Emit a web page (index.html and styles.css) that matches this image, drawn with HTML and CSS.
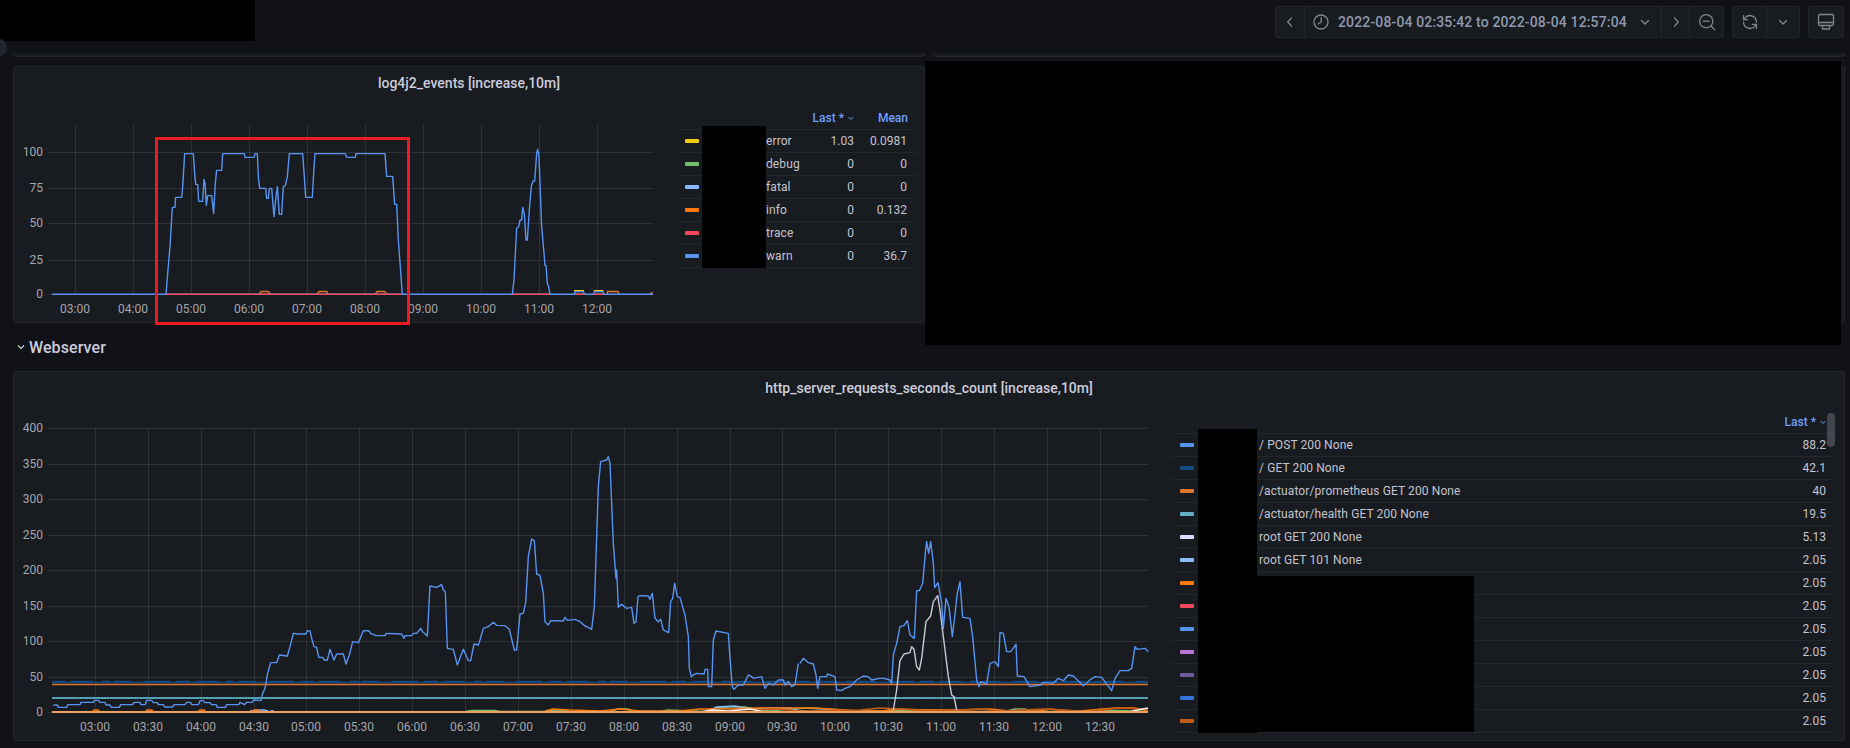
FILE: index.html
```html
<!DOCTYPE html>
<html lang="en">
<head>
<meta charset="utf-8">
<title>Dashboard</title>
<link rel="stylesheet" href="styles.css">
</head>
<body>
<div class="dash">
  <header class="topbar">
    <div class="group">
      <button class="tb tb-narrow"><svg class="ico" viewBox="0 0 16 16"><path d="M9.500 4 5.700 8l3.800 4"/></svg></button>
      <button class="tb tb-time">
        <svg class="ico ico-clock" viewBox="0 0 16 16"><circle cx="8" cy="8" r="7"/><path d="M8.200 3.600V8L5.200 10"/></svg>
        <span class="range">2022-08-04 02:35:42 to 2022-08-04 12:57:04</span>
        <svg class="ico ico-down" viewBox="0 0 16 16"><path d="M4.500 6.500 8 10l3.500-3.500"/></svg>
      </button>
      <button class="tb tb-narrow"><svg class="ico" viewBox="0 0 16 16"><path d="M6.500 4l3.800 4-3.800 4"/></svg></button>
      <button class="tb tb-zoom"><svg class="ico ico-lg" viewBox="0 0 18 18"><circle cx="8.200" cy="8.200" r="6.600"/><path d="M5.200 8.200h6M13 13l3.500 3.500"/></svg></button>
    </div>
    <div class="group">
      <button class="tb tb-half"><svg class="ico ico-lg" viewBox="0 0 18 18"><path d="M15.500 9A6.500 6.500 0 0 0 4.300 4.600L2.600 6.600"/><path d="M2.600 2.600v4h4"/><path d="M2.500 9a6.500 6.500 0 0 0 11.200 4.400l1.700-2"/><path d="M15.400 15.400v-4h-4"/></svg></button>
      <button class="tb tb-half"><svg class="ico" viewBox="0 0 16 16"><path d="M4.500 6.500 8 10l3.500-3.500"/></svg></button>
    </div>
    <div class="group">
      <button class="tb tb-monitor"><svg class="ico ico-lg" viewBox="0 0 18 18"><rect x="1.500" y="1.500" width="15" height="11" rx="1.500"/><path d="M1.500 9.500h15M5.500 12.500v3.500h7v-3.500"/></svg></button>
    </div>
  </header>

  <div class="cols stubs">
    <div class="stub"></div>
    <div class="stub"></div>
  </div>

  <div class="cols upper">
    <section class="panel">
      <h2 class="panel-title">log4j2_events [increase,10m]</h2>
      <div class="panel-body">
        <svg class="chart chart-a" viewBox="14 99 650 223">
          <g class="grid">
            <path d="M48 152.500H653M48 188.500H653M48 223.500H653M48 260.500H653M48 294.500H653"/>
            <path d="M75.500 125V294M133.500 125V294M191.500 125V294M249.500 125V294M307.500 125V294M365.500 125V294M423.500 125V294M481.500 125V294M539.500 125V294M597.500 125V294"/>
          </g>
          <g class="axis">
            <text class="yl" x="43" y="156">100</text>
            <text class="yl" x="43" y="192">75</text>
            <text class="yl" x="43" y="227">50</text>
            <text class="yl" x="43" y="264">25</text>
            <text class="yl" x="43" y="298">0</text>
            <text class="xl" x="75" y="313">03:00</text>
            <text class="xl" x="133" y="313">04:00</text>
            <text class="xl" x="191" y="313">05:00</text>
            <text class="xl" x="249" y="313">06:00</text>
            <text class="xl" x="307" y="313">07:00</text>
            <text class="xl" x="365" y="313">08:00</text>
            <text class="xl" x="423" y="313">09:00</text>
            <text class="xl" x="481" y="313">10:00</text>
            <text class="xl" x="539" y="313">11:00</text>
            <text class="xl" x="597" y="313">12:00</text>
          </g>
          <path class="ln s-orange" d="M259 294.300L261 291.500H268.500L270.500 294.300M317 294.300L319 291.500H327L328 294.300M375 294.300L377 291.500H385L386.500 294.300M607.500 294.300V291.500H618L619 294.300M651 294V293H653"/>
          <path class="ln s-yellow" d="M574 290.700H584M594 290.700H603.500"/>
          <path class="ln s-blue" d="M52 294.300H653"/>
          <path class="ln s-red" d="M166 294.300H402M512 294.300H550M575 294.300H585M594 294.300H603"/>
          <g transform="translate(0 40) scale(.33333)">
            <polyline class="ln s-blue" points="498,763 503,700 510,620 517,502 525,502 527,472 545,472 548,440 554,341 580,341 584,400 587,433 593,433 596,484 608,484 612,418 615,430 619,497 623,467 635,467 641,520 646,430 650,391 665,391 668,341 733,341 735,352 762,352 765,341 772,341 775,410 779,445 797,445 800,475 805,475 808,445 815,445 822,530 827,480 832,440 838,523 845,523 850,440 856,437 862,410 868,341 908,341 913,410 917,472 937,472 941,400 945,341 1036,341 1040,352 1066,352 1068,341 1155,341 1160,409 1178,409 1184,493 1190,493 1195,600 1207,763"/>
          </g>
          <g transform="translate(440 100) scale(.33333)">
            <polyline class="ln s-blue" points="217,583 222,540 230,385 236,380 240,360 245,360 248,322 253,342 258,420 262,420 268,330 274,258 279,243 284,243 290,160 293,148 297,170 305,380 312,460 315,496 318,496 322,550 326,560 330,583"/>
            <polyline class="ln s-blue" points="403,583 405,575 430,575 434,583"/>
            <polyline class="ln s-blue" points="460,583 463,575 488,575 492,583"/>
          </g>
        </svg>
        <div class="legend legend-a">
          <div class="lg-head"><span class="lg-h lg-last">Last * <svg class="sort" viewBox="0 0 8 8"><path d="M1.500 3 4 5.500 6.500 3"/></svg></span><span class="lg-h lg-mean">Mean</span></div>
          <div class="lg-row"><i class="sw c-yellow"></i><span class="nm">error</span><span class="v">1.03</span><span class="v v2">0.0981</span></div>
          <div class="lg-row"><i class="sw c-green"></i><span class="nm">debug</span><span class="v">0</span><span class="v v2">0</span></div>
          <div class="lg-row"><i class="sw c-lblue"></i><span class="nm">fatal</span><span class="v">0</span><span class="v v2">0</span></div>
          <div class="lg-row"><i class="sw c-orange"></i><span class="nm">info</span><span class="v">0</span><span class="v v2">0.132</span></div>
          <div class="lg-row"><i class="sw c-red"></i><span class="nm">trace</span><span class="v">0</span><span class="v v2">0</span></div>
          <div class="lg-row"><i class="sw c-blue"></i><span class="nm">warn</span><span class="v">0</span><span class="v v2">36.7</span></div>
        </div>
      </div>
    </section>
    <section class="panel"></section>
  </div>

  <h3 class="row-title"><svg class="row-chev" viewBox="0 0 8 8"><path d="M1 2.500 4 5.500 7 2.500"/></svg>Webserver</h3>

  <section class="panel panel-wide">
    <h2 class="panel-title">http_server_requests_seconds_count [increase,10m]</h2>
    <div class="panel-body">
      <svg class="chart chart-b" viewBox="14 404 1158 336">
        <g class="grid">
          <path d="M48 428.500H1148M48 464.500H1148M48 499.500H1148M48 535.500H1148M48 570.500H1148M48 606.500H1148M48 641.500H1148M48 677.500H1148M48 712.500H1148"/>
          <path d="M95.500 428V712M148.500 428V712M201.500 428V712M254.500 428V712M306.500 428V712M359.500 428V712M412.500 428V712M465.500 428V712M518.500 428V712M571.500 428V712M624.500 428V712M677.500 428V712M730.500 428V712M782.500 428V712M835.500 428V712M888.500 428V712M941.500 428V712M994.500 428V712M1047.500 428V712M1100.500 428V712"/>
        </g>
        <g class="axis">
          <text class="yl" x="43" y="432">400</text>
          <text class="yl" x="43" y="468">350</text>
          <text class="yl" x="43" y="503">300</text>
          <text class="yl" x="43" y="539">250</text>
          <text class="yl" x="43" y="574">200</text>
          <text class="yl" x="43" y="610">150</text>
          <text class="yl" x="43" y="645">100</text>
          <text class="yl" x="43" y="681">50</text>
          <text class="yl" x="43" y="716">0</text>
          <text class="xl" x="95" y="731">03:00</text>
          <text class="xl" x="148" y="731">03:30</text>
          <text class="xl" x="201" y="731">04:00</text>
          <text class="xl" x="254" y="731">04:30</text>
          <text class="xl" x="306" y="731">05:00</text>
          <text class="xl" x="359" y="731">05:30</text>
          <text class="xl" x="412" y="731">06:00</text>
          <text class="xl" x="465" y="731">06:30</text>
          <text class="xl" x="518" y="731">07:00</text>
          <text class="xl" x="571" y="731">07:30</text>
          <text class="xl" x="624" y="731">08:00</text>
          <text class="xl" x="677" y="731">08:30</text>
          <text class="xl" x="730" y="731">09:00</text>
          <text class="xl" x="782" y="731">09:30</text>
          <text class="xl" x="835" y="731">10:00</text>
          <text class="xl" x="888" y="731">10:30</text>
          <text class="xl" x="941" y="731">11:00</text>
          <text class="xl" x="994" y="731">11:30</text>
          <text class="xl" x="1047" y="731">12:00</text>
          <text class="xl" x="1100" y="731">12:30</text>
        </g>
        <path class="ln s-navy" d="M52 682.500H1148"/>
        <path class="ln s-navy dash-a" d="M52 681.500H1148"/>
        <path class="ln s-orange" d="M52 684.500H1148"/>
        <path class="ln2 s-cyan" d="M52 698H1148"/>
        <path class="ln s-cyandot" d="M52 698H1148"/>
        <path class="ln s-green" d="M465 711.500L472 710.500H495L500 711.500H545L550 710.500H565L570 711.500H610L618 709H628L634 711.500H660L668 710L680 710.500L705 711.500L715 708L728 707H745L755 709L770 711L790 709L810 708L825 709L850 711H885L889 710L950 710.500L960 711.500H1005L1015 709H1025L1030 711.500H1100L1104 710.500H1120L1148 711.500"/>
        <path class="ln s-lblue" d="M250 711L258 710H264L268 711M270 711H274M710 711L716 707L735 706L750 709L770 708L790 708L800 711L830 710L846 711M1000 712L1015 710L1022 711"/>
        <path class="ln s-orange2" d="M545 711L553 709L570 710L600 711L620 709L640 711H680L700 709H720L760 708H815L830 709L860 711H880L900 709L925 710H960L990 709L1010 711H1040L1050 709L1060 710L1080 711L1115 708H1135L1148 711"/>
        <path class="ln s-darkorange" d="M720 712L730 709L745 710L775 709L800 711L860 710L880 708L900 709L930 711L980 709L1000 711L1045 709L1060 710L1090 712L1118 708L1140 709L1148 710"/>
        <path class="ln s-white" d="M700 712L712 710L728 711L750 709L765 712M1132 711L1148 708"/>
        <path class="ln2 s-bright" d="M52 712H1148"/>
        <path class="ln s-orange2" d="M92 711.500L94 710H98L100 711.500M145 711.500L147 710H152L153 711.500M198 711.500L200 710H204L206 711.500M252 711.500L254 710H258L260 711.500"/>
        <g transform="translate(0 330) scale(.33333)">
          <polyline class="ln s-blue" points="160,1125 172,1125 175,1132 200,1132 203,1124 240,1124 243,1117 280,1117 283,1111 295,1111 300,1117 315,1117 318,1125 330,1125 333,1132 358,1132 362,1124 398,1124 402,1117 420,1117 423,1124 436,1124 440,1111 455,1111 460,1118 472,1118 475,1124 490,1124 494,1131 518,1131 522,1124 555,1124 560,1117 572,1117 575,1124 595,1124 600,1112 610,1112 615,1118 630,1118 634,1124 648,1124 652,1132 676,1132 680,1124 716,1124 720,1117 734,1124 740,1117 757,1117 760,1110 783,1112 788,1090 795,1075 803,1030 812,998 830,998 838,975 862,978 870,950 880,910 895,912 918,912 922,902 930,903 935,925 942,950 950,952 956,982 968,982 972,990 982,990 990,958 1002,990 1010,972 1030,972 1038,1002 1048,975 1058,935 1075,938 1090,902 1108,903 1112,910 1128,917 1155,917 1158,910 1205,912 1212,925 1215,917 1235,917 1240,910 1250,910 1262,895 1268,905 1282,918 1290,768 1310,772 1325,764 1330,780 1336,785 1342,955 1360,958 1372,1005 1390,958 1405,992 1412,992 1422,942 1435,945 1440,930"/>
        </g>
        <g transform="translate(480 420) scale(.33333)">
          <polyline class="ln s-blue" points="0,660 10,625 25,620 40,607 50,616 75,617 88,628 103,690 110,690 120,582 130,580 137,548 145,410 155,357 163,362 170,462 180,466 190,520 195,605 205,615 212,602 250,603 255,592 262,601 285,598 300,605 315,618 325,622 335,628 343,560 355,200 362,125 380,120 385,110 390,130 400,370 408,475 410,450 415,562 425,553 440,565 455,562 462,610 468,605 474,530 480,527 505,528 510,538 517,520 525,595 535,605 542,598 550,630 566,638 572,545 578,535 584,490 592,530 600,533 615,585 625,650 628,745 634,770 640,765 650,760 672,762 675,748 683,748 685,800 695,800 700,660 708,633 745,640 750,715 757,800 762,808 775,795 790,795 805,765 815,770 820,775 845,770 855,805 865,790 880,795 895,780 910,780 915,795 925,785 935,800 945,795 955,730"/>
        </g>
        <g transform="translate(800 420) scale(.33333)">
          <polyline class="ln s-silver" points="280,870 290,810 300,722 312,702 330,698 335,680 342,688 350,740 358,750 365,715 378,605 392,588 400,545 413,527 420,570 430,650 445,770 455,825 462,830 470,870"/>
          <polyline class="ln s-blue" points="0,730 10,715 25,728 40,732 48,765 53,805 60,770 80,770 82,762 105,770 110,810 125,812 135,805 150,800 170,780 190,768 205,770 215,780 240,775 250,775 270,780 275,792 280,705 290,670 300,620 312,617 322,602 330,645 343,655 350,512 358,512 368,490 376,400 380,365 386,400 392,365 400,430 404,503 414,488 425,550 430,625 438,535 447,560 457,650 463,600 472,520 480,485 488,592 510,595 518,650 530,780 537,800 542,785 560,792 570,730 585,725 595,740 600,637 610,640 620,695 632,695 648,673 652,768 672,770 690,800 722,795 728,787 760,790 775,775 790,782 805,765 820,768 850,797 870,780 885,770 905,772 935,812 945,775 960,752 985,752 995,745 1005,680 1012,688 1035,685 1045,695"/>
        </g>
      </svg>
      <div class="legend legend-b">
        <div class="lg-head"><span class="lg-h lg-last">Last * <svg class="sort" viewBox="0 0 8 8"><path d="M1.500 3 4 5.500 6.500 3"/></svg></span></div>
        <div class="lg-row"><i class="sw c-blue"></i><span class="nm">/ POST 200 None</span><span class="v">88.2</span></div>
        <div class="lg-row"><i class="sw c-navy"></i><span class="nm">/ GET 200 None</span><span class="v">42.1</span></div>
        <div class="lg-row"><i class="sw c-dorange"></i><span class="nm">/actuator/prometheus GET 200 None</span><span class="v">40</span></div>
        <div class="lg-row"><i class="sw c-cyan"></i><span class="nm">/actuator/health GET 200 None</span><span class="v">19.5</span></div>
        <div class="lg-row"><i class="sw c-white"></i><span class="nm">root GET 200 None</span><span class="v">5.13</span></div>
        <div class="lg-row"><i class="sw c-lblue"></i><span class="nm">root GET 101 None</span><span class="v">2.05</span></div>
        <div class="lg-row"><i class="sw c-orange"></i><span class="nm"></span><span class="v">2.05</span></div>
        <div class="lg-row"><i class="sw c-red"></i><span class="nm"></span><span class="v">2.05</span></div>
        <div class="lg-row"><i class="sw c-blue"></i><span class="nm"></span><span class="v">2.05</span></div>
        <div class="lg-row"><i class="sw c-purple"></i><span class="nm"></span><span class="v">2.05</span></div>
        <div class="lg-row"><i class="sw c-violet"></i><span class="nm"></span><span class="v">2.05</span></div>
        <div class="lg-row"><i class="sw c-mblue"></i><span class="nm"></span><span class="v">2.05</span></div>
        <div class="lg-row"><i class="sw c-rust"></i><span class="nm"></span><span class="v">2.05</span></div>
      </div>
    </div>
  </section>

  <div class="over o-topleft"></div>
  <div class="over o-avatar"></div>
  <div class="over o-right"></div>
  <div class="over o-names-a"></div>
  <div class="over o-names-b"></div>
  <div class="over o-names-c"></div>
  <div class="over o-scroll"></div>
  <div class="over o-mark"></div>
</div>
</body>
</html>
```

FILE: styles.css
```css
* { box-sizing: border-box; }
html, body { margin: 0; padding: 0; background: #111217; }
body { font-family: Roboto, "Liberation Sans", sans-serif; font-size: 12px; color: #ccccdc; overflow: hidden; }
.dash { position: relative; width: 1850px; height: 748px; overflow: hidden; }

/* toolbar */
.topbar { display: flex; justify-content: flex-end; gap: 8px; height: 44px; padding: 6px 6px 6px 0; }
.group { display: flex; height: 32px; background: #181b1f; border: 1px solid #24262c; border-radius: 2px; }
.tb { display: flex; align-items: center; justify-content: center; height: 100%; padding: 0; margin: 0; background: none; border: 0; border-left: 1px solid #24262c; font: inherit; color: inherit; }
.tb:first-child { border-left: 0; }
.tb-narrow { width: 28px; }
.tb-time { width: 357px; justify-content: flex-start; padding-left: 8px; }
.tb-zoom { width: 34px; }
.tb-half { width: 33px; }
.tb-monitor { width: 34px; }
.ico { width: 16px; height: 16px; fill: none; stroke: #85868c; stroke-width: 1.300; stroke-linecap: round; stroke-linejoin: round; }
.ico-lg { width: 18px; height: 18px; }
.ico-clock { flex: none; }
.ico-down { flex: none; margin-left: 10px; }
.range { margin-left: 9px; font-size: 14px; font-weight: 500; letter-spacing: .14px; color: #8f9ab0; white-space: nowrap; }

/* layout columns */
.cols { display: grid; grid-template-columns: 912px 912px; gap: 8px; margin-left: 13px; }
.stubs { margin-top: 9px; height: 4px; }
.stub { background: #181b1f; border: 1px solid #24262c; border-top: 0; border-radius: 0 0 3px 3px; }
.upper { margin-top: 9px; height: 257px; }

/* panels */
.panel { display: flex; flex-direction: column; background: #181b1f; border: 1px solid #24262c; border-radius: 3px; }
.panel-wide { width: 1832px; height: 370px; margin-left: 13px; }
.panel-title { margin: 0; height: 32px; line-height: 32px; text-align: center; font-size: 14px; font-weight: 500; color: #ccccdc; }
.panel-body { display: flex; flex: 1; min-height: 0; }
.chart { display: block; flex: none; }
.chart-a { width: 650px; height: 223px; }
.chart-b { width: 1158px; height: 336px; }

.row-title { display: flex; align-items: center; height: 48px; margin: 0; padding-left: 17px; font-size: 16px; font-weight: 500; letter-spacing: .1px; color: #ccccdc; }
.row-chev { width: 8px; height: 8px; margin-right: 4px; fill: none; stroke: #ccccdc; stroke-width: 1.200; }

/* svg */
.grid path { fill: none; stroke: rgba(240, 250, 255, .1); stroke-width: 1; }
.axis text { font-family: Roboto, "Liberation Sans", sans-serif; font-size: 12px; fill: #a5a6ad; }
.yl { text-anchor: end; }
.xl { text-anchor: middle; }
.ln, .ln2 { fill: none; stroke-linejoin: round; vector-effect: non-scaling-stroke; stroke-width: 1.400; }
.ln2 { stroke-width: 2; }
.s-blue { stroke: #5794f2; }
.s-red { stroke: #f2495c; }
.s-orange { stroke: #e0752d; }
.s-yellow { stroke: #f2cc0c; }
.s-navy { stroke: #134a82; }
.dash-a { stroke-dasharray: 14 5 22 9 8 4 18 12 26 6; }
.s-cyan { stroke: #57a6b8; }
.s-cyandot { stroke: #3c8494; stroke-width: 1; stroke-dasharray: 1 2; }
.s-green { stroke: #73bf69; }
.s-lblue { stroke: #8ab8ff; }
.s-orange2 { stroke: #ff780a; }
.s-darkorange { stroke: #c15c17; }
.s-white { stroke: #f4f4ff; }
.s-bright { stroke: #f0a060; }
.s-silver { stroke: #c8c8d8; }

/* legends */
.legend { flex: none; margin-left: 13px; }
.legend-a { width: 239px; padding-top: 7px; }
.legend-b { width: 663px; margin-left: 0; padding-top: 6px; }
.lg-head { display: flex; justify-content: flex-end; align-items: center; height: 24px; border-bottom: 1px solid #24262c; padding-right: 8px; }
.lg-h { font-weight: 500; color: #6e9fff; white-space: nowrap; }
.lg-last { display: flex; align-items: center; gap: 3px; }
.lg-mean { width: 53px; text-align: right; }
.sort { width: 8px; height: 8px; fill: none; stroke: #6e9fff; stroke-width: 1; }
.lg-row { display: flex; align-items: center; height: 23px; border-bottom: 1px solid #24262c; padding: 0 9px 0 8px; color: #c4c4d0; }
.sw { flex: none; width: 14px; height: 4px; border-radius: 1px; }
.nm { flex: 1; margin-left: 65px; letter-spacing: .1px; white-space: nowrap; }
.legend-a .nm { margin-left: 67px; }
.v { text-align: right; }
.v2 { width: 53px; }
.c-yellow { background: #f2cc0c; }
.c-green { background: #73bf69; }
.c-lblue { background: #8ab8ff; }
.c-orange { background: #ff780a; }
.c-red { background: #f2495c; }
.c-blue { background: #5794f2; }
.c-navy { background: #134a82; }
.c-dorange { background: #e0752d; }
.c-cyan { background: #64b0c8; }
.c-white { background: #e0dcfb; }
.c-purple { background: #b877d9; }
.c-violet { background: #705da0; }
.c-mblue { background: #3274d9; }
.c-rust { background: #c15c17; }

/* overlays: redactions, scrollbar, annotation */
.over { position: absolute; }
.o-topleft { left: 0; top: 0; width: 255px; height: 41px; background: #000; }
.o-avatar { left: -9px; top: 39px; width: 16px; height: 17px; background: #23252e; border-radius: 50%; }
.o-right { left: 925px; top: 61px; width: 916px; height: 284px; background: #000; }
.o-names-a { left: 702px; top: 126px; width: 64px; height: 142px; background: #000; }
.o-names-b { left: 1198px; top: 429px; width: 59px; height: 304px; background: #000; }
.o-names-c { left: 1257px; top: 576px; width: 217px; height: 156px; background: #000; }
.o-scroll { left: 1827px; top: 413px; width: 8px; height: 34px; background: rgba(120, 124, 135, .45); border-radius: 4px; }
.o-mark { left: 155px; top: 137px; width: 255px; height: 188px; border: 3px solid #ed1c24; }
```
